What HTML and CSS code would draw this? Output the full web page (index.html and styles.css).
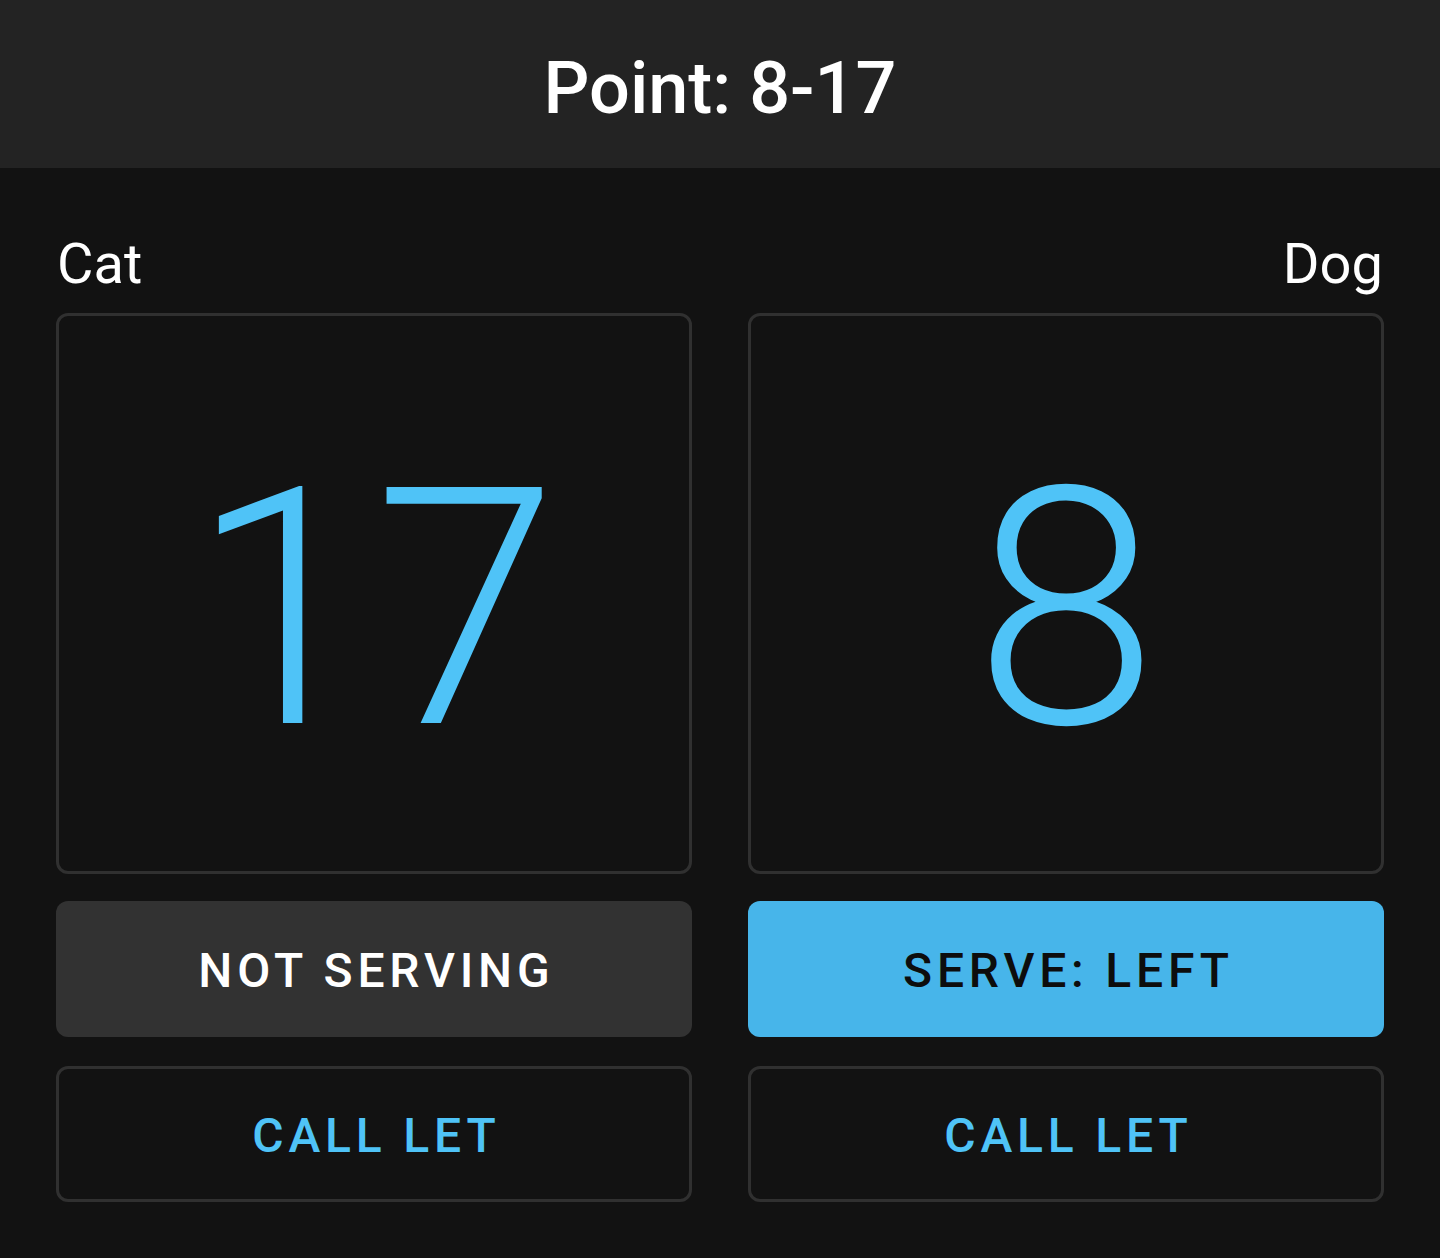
FILE: index.html
```html
<!DOCTYPE html>
<html lang="en">
<head>
<meta charset="utf-8">
<title>Point</title>
<link rel="stylesheet" href="styles.css">
</head>
<body>
<header class="topbar">
  <h1 class="title">Point: 8-17</h1>
</header>
<main class="board">
  <section class="player">
    <div class="name name-left">Cat</div>
    <div class="score-box"><span class="score">17</span></div>
    <button class="btn btn-serve-off">NOT SERVING</button>
    <button class="btn btn-let">CALL LET</button>
  </section>
  <section class="player">
    <div class="name name-right">Dog</div>
    <div class="score-box"><span class="score">8</span></div>
    <button class="btn btn-serve-on">SERVE: LEFT</button>
    <button class="btn btn-let">CALL LET</button>
  </section>
</main>
</body>
</html>
```

FILE: styles.css
```css
* { box-sizing: border-box; }
html, body {
  margin: 0;
  padding: 0;
  background: #121212;
  font-family: Roboto, "Noto Sans", sans-serif;
  color: #fff;
}
body { height: 1258px; }
.topbar {
  height: 168px;
  background: #232323;
  display: flex;
  align-items: center;
  justify-content: center;
  padding-top: 10px;
}
.title {
  margin: 0;
  font-size: 72px;
  font-weight: 500;
  line-height: 1;
  color: #fff;
}
.board {
  display: grid;
  grid-template-columns: 1fr 1fr;
  column-gap: 56px;
  padding: 61px 56px 56px;
}
.player {
  display: flex;
  flex-direction: column;
}
.name {
  font-size: 56px;
  line-height: 70px;
  font-weight: 400;
  margin-bottom: 14px;
  padding-left: 1px;
}
.name-right { text-align: right; padding-left: 0; padding-right: 1px; }
.score-box {
  height: 561px;
  border: 3px solid #303030;
  border-radius: 12px;
  display: flex;
  align-items: center;
  justify-content: center;
}
.score {
  font-size: 332px;
  font-weight: 300;
  color: #4fc3f7;
  line-height: 1;
  padding-top: 32px;
}
.btn {
  height: 136px;
  border-radius: 12px;
  font-family: Roboto, "Noto Sans", sans-serif;
  font-size: 48px;
  font-weight: 500;
  letter-spacing: 0.1em;
  border: none;
  padding: 2px 0 0 0.1em;
  cursor: pointer;
}
.btn-serve-off {
  margin-top: 27px;
  background: #323232;
  color: #fff;
}
.btn-serve-on {
  margin-top: 27px;
  background: #47b5ea;
  color: #0d0d0d;
}
.btn-let {
  margin-top: 29px;
  background: transparent;
  border: 3px solid #303030;
  color: #4fc3f7;
}
```
